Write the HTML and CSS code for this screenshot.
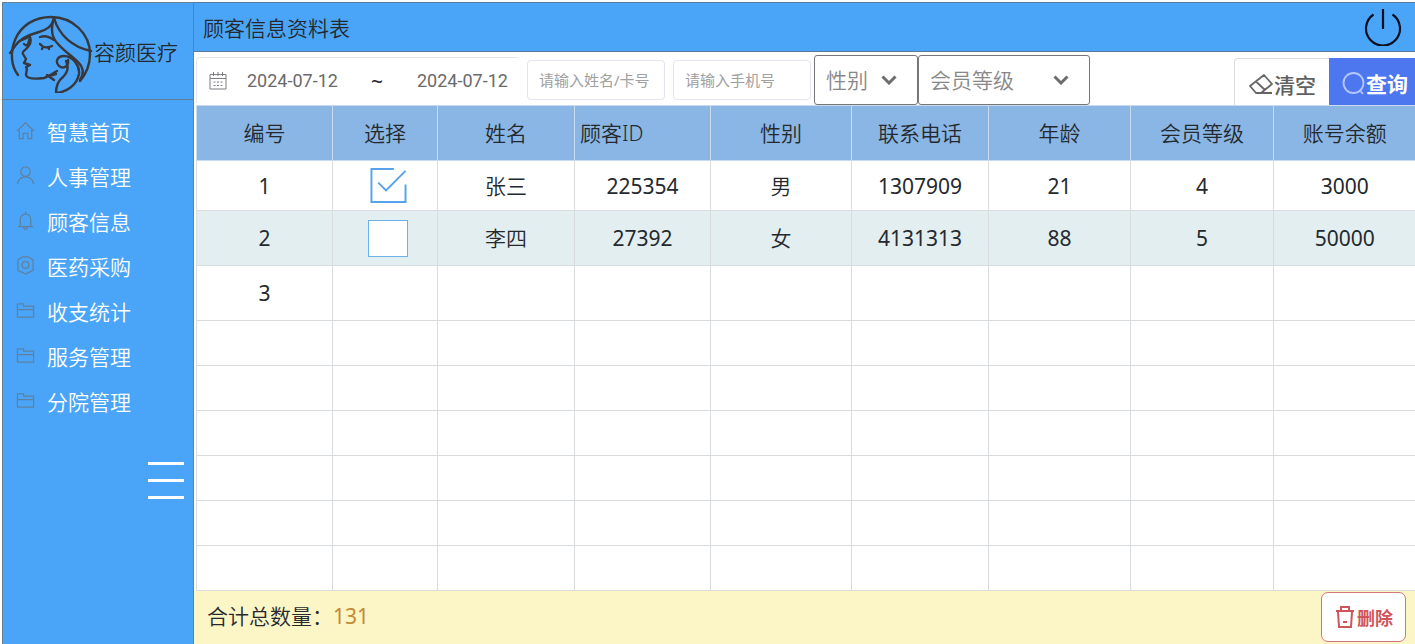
FILE: index.html
```html
<!DOCTYPE html>
<html lang="zh-CN">
<head>
<meta charset="utf-8">
<title>顾客信息资料表</title>
<link rel="stylesheet" href="styles.css">
</head>
<body>
<div class="app">
  <aside class="sidebar">
    <div class="brand">
      <svg class="brand-logo" viewBox="4 -1 86 84" fill="none" stroke="#38383c" stroke-width="2.4" stroke-linecap="round" stroke-linejoin="round">
        <path d="M14 65C7 56 6 42 11 30C17 15 31 7 47 7C69 7 86 24 86 44C86 54 82 64 76 71"/>
        <path d="M50 8C48 17 42 20 35 22C24 25 15 30 11 36C9 39 8 41 6 43"/>
        <path d="M50 8C46 20 49 29 54 34C60 41 68 46 74 52C80 58 80 64 76 70"/>
        <path d="M50 8C55 25 68 37 87 41"/>
        <path d="M64 50C65 57 59 59 55 56C51 52 53 46 60 46C69 46 76 56 75 64C73 75 63 82 52 83C52 75 55 70 59 67C64 62 65 57 62 51"/>
        <path d="M26 27C28 32 26 35 22 39C19 42 18 42 19 44L22 49L20 53L26 55L22 57C24 59 22 62 22 65C23 69 32 69 40 68C46 66 49 63 53 61"/>
        <path d="M43 65L50 70M45 66L52 64"/>
        <path d="M36 27C41 25 46 27 50 30M36 34C39 38 44 38 48 36M39 37L38 39M44 37L45 39M18 30L25 27M20 34C23 37 25 34 25 30"/>
      </svg>
      <span class="brand-name">容颜医疗</span>
    </div>
    <nav class="menu">
      <a class="menu-item" href="#"><svg class="menu-icon" viewBox="0 0 20 20"><path d="M1 10.500L10 2L19 10.500M3.500 9V18.500H7.500V13H12.500V18.500H16.500V9"/></svg>智慧首页</a>
      <a class="menu-item" href="#"><svg class="menu-icon" viewBox="0 0 20 20"><circle cx="10" cy="6" r="5"/><path d="M1.500 19C2 9 18 9 18.500 19"/></svg>人事管理</a>
      <a class="menu-item" href="#"><svg class="menu-icon" viewBox="0 0 20 20"><path d="M2 16.500H18M4.500 16.500V9C4.500 1.500 15.500 1.500 15.500 9V16.500M10 0.500V3M8 16.500C8 20 12 20 12 16.500"/></svg>顾客信息</a>
      <a class="menu-item" href="#"><svg class="menu-icon" viewBox="0 0 20 20"><path d="M7 1H13L18 4V15L10 19L2 15V4Z"/><circle cx="10" cy="9.500" r="3.500"/></svg>医药采购</a>
      <a class="menu-item" href="#"><svg class="menu-icon" viewBox="0 0 20 20"><path d="M1.500 17V3H8V5.500H18.500V17ZM1.500 9H18.500"/></svg>收支统计</a>
      <a class="menu-item" href="#"><svg class="menu-icon" viewBox="0 0 20 20"><path d="M1.500 17V3H8V5.500H18.500V17ZM1.500 9H18.500"/></svg>服务管理</a>
      <a class="menu-item" href="#"><svg class="menu-icon" viewBox="0 0 20 20"><path d="M1.500 17V3H8V5.500H18.500V17ZM1.500 9H18.500"/></svg>分院管理</a>
    </nav>
    <button class="collapse" type="button" aria-label="收起菜单"><span></span><span></span><span></span></button>
  </aside>

  <main class="main">
    <header class="header">
      <h1 class="title">顾客信息资料表</h1>
      <button class="power" type="button" aria-label="退出">
        <svg viewBox="0 0 38 38" width="38" height="38" fill="none" stroke="#0b1020" stroke-width="2.200"><path d="M9.500 6.500A17 17 0 1 0 28.500 6.500M19 1V21"/></svg>
      </button>
    </header>

    <form class="filters">
      <div class="dates">
        <svg class="calendar" viewBox="0 0 18 18"><path d="M1 2.500H17V17H1ZM1 6.500H17M4.500 0V4M9 0V4M13.500 0V4"/><path stroke-dasharray="2 1.500" d="M4.500 10H14M4.500 13.500H14"/></svg>
        <input class="date" type="text" value="2024-07-12" aria-label="开始日期">
        <span class="tilde">~</span>
        <input class="date" type="text" value="2024-07-12" aria-label="结束日期">
      </div>
      <input class="field" type="text" placeholder="请输入姓名/卡号" aria-label="姓名或卡号">
      <input class="field" type="text" placeholder="请输入手机号" aria-label="手机号">
      <div class="selects">
        <div class="picker">
          <select class="select gender" aria-label="性别"><option>性别</option></select>
          <svg class="chevron" viewBox="0 0 16 10"><path d="M1.500 1.500L8 8L14.500 1.500"/></svg>
        </div>
        <div class="picker">
          <select class="select level" aria-label="会员等级"><option>会员等级</option></select>
          <svg class="chevron" viewBox="0 0 16 10"><path d="M1.500 1.500L8 8L14.500 1.500"/></svg>
        </div>
      </div>
      <div class="actions">
        <button class="btn clear" type="reset"><svg viewBox="0 0 26 22" width="26" height="22" fill="none" stroke="#666" stroke-width="1.800" stroke-linejoin="round"><path d="M2 13L16 2L24 11L13 20H8ZM8 8.500L17 17M12 20H24"/></svg>清空</button>
        <button class="btn query" type="button"><svg viewBox="0 0 24 24" width="24" height="24" fill="none" stroke="#b4c6ff" stroke-width="1.800"><circle cx="11.500" cy="12" r="10"/><path d="M17.500 19L21 23"/></svg>查询</button>
      </div>
    </form>

    <table class="grid">
      <colgroup><col class="c136"><col class="c105"><col class="c137"><col class="c136"><col class="c141"><col class="c137"><col class="c142"><col class="c143"><col class="c142"></colgroup>
      <thead>
        <tr><th>编号</th><th>选择</th><th>姓名</th><th class="start">顾客ID</th><th>性别</th><th>联系电话</th><th>年龄</th><th>会员等级</th><th>账号余额</th></tr>
      </thead>
      <tbody>
        <tr class="first">
          <td>1</td>
          <td><label class="check"><input type="checkbox" checked aria-label="选择张三"><svg viewBox="0 0 40 38"><path d="M26 2H3V36H38V18M10 16L18 24L38 4"/></svg></label></td>
          <td class="text">张三</td><td>225354</td><td class="text">男</td><td>1307909</td><td>21</td><td>4</td><td>3000</td>
        </tr>
        <tr class="tall shaded">
          <td>2</td>
          <td><label class="check"><input type="checkbox" aria-label="选择李四"><svg viewBox="0 0 40 38"><path d="M26 2H3V36H38V18M10 16L18 24L38 4"/></svg></label></td>
          <td class="text">李四</td><td>27392</td><td class="text">女</td><td>4131313</td><td>88</td><td>5</td><td>50000</td>
        </tr>
        <tr class="tall"><td>3</td><td></td><td></td><td></td><td></td><td></td><td></td><td></td><td></td></tr>
        <tr><td></td><td></td><td></td><td></td><td></td><td></td><td></td><td></td><td></td></tr>
        <tr><td></td><td></td><td></td><td></td><td></td><td></td><td></td><td></td><td></td></tr>
        <tr><td></td><td></td><td></td><td></td><td></td><td></td><td></td><td></td><td></td></tr>
        <tr><td></td><td></td><td></td><td></td><td></td><td></td><td></td><td></td><td></td></tr>
        <tr><td></td><td></td><td></td><td></td><td></td><td></td><td></td><td></td><td></td></tr>
        <tr><td></td><td></td><td></td><td></td><td></td><td></td><td></td><td></td><td></td></tr>
      </tbody>
    </table>

    <footer class="footer">
      <p class="total">合计总数量：<span class="count">131</span></p>
      <button class="delete" type="button"><svg viewBox="0 0 20 24" width="20" height="24" fill="none" stroke="#d0555b" stroke-width="2"><path d="M1 6H19M6 5V2H14V5M3 7L4 22H16L17 7M8 17H12"/></svg>删除</button>
    </footer>
  </main>
</div>
</body>
</html>
```

FILE: styles.css
```css
* {
  box-sizing: border-box;
}

body {
  margin: 0;
  background: #fff;
  color: #25292d;
  font-family: "Noto Sans", "Noto Sans CJK SC", sans-serif;
  font-size: 21px;
  font-weight: 350;
}

button,
input,
select {
  margin: 0;
  font-family: inherit;
  font-weight: inherit;
}

.app {
  display: flex;
  min-height: 100vh;
  padding: 2px 0 0 2px;
}

.sidebar {
  display: flex;
  flex-direction: column;
  flex: none;
  width: 192px;
  background: #4aa5f8;
  border: 1px solid #6b7f92;
  border-bottom: 0;
}

.brand {
  display: flex;
  align-items: center;
  height: 97px;
  padding-left: 5px;
  border-bottom: 1px solid #5f7d98;
}

.brand-logo {
  flex: none;
  width: 86px;
  height: 84px;
}

.brand-name {
  white-space: nowrap;
}

.menu {
  padding-top: 8px;
}

.menu-item {
  display: flex;
  align-items: center;
  gap: 12px;
  height: 45px;
  padding-left: 13px;
  color: #fff;
  text-decoration: none;
}

.menu-icon {
  width: 19px;
  height: 19px;
  fill: none;
  stroke: #5f819f;
  stroke-width: 1.3;
}

.collapse {
  display: flex;
  flex-direction: column;
  gap: 14px;
  align-self: flex-end;
  margin: 39px 9px 0 0;
  padding: 0;
  border: 0;
  background: none;
}

.collapse span {
  width: 36px;
  height: 3px;
  background: #fff;
}

.main {
  display: flex;
  flex: 1;
  flex-direction: column;
  min-width: 0;
}

.header {
  display: flex;
  align-items: center;
  justify-content: space-between;
  height: 50px;
  padding: 0 13px 0 9px;
  background: #4aa5f8;
  border: solid #557a9a;
  border-width: 1px 0;
}

.title {
  margin: 0;
  font-size: 21px;
  font-weight: 350;
}

.power {
  display: flex;
  padding: 0;
  border: 0;
  background: none;
}

.filters {
  display: flex;
  align-items: center;
  height: 53px;
  padding: 3px 0 0 2px;
}

.dates {
  display: flex;
  align-items: center;
  width: 322px;
  height: 46px;
  margin-right: 9px;
  padding-left: 12px;
  border: solid #e3e6ea;
  border-width: 1px 0 0 1px;
  border-radius: 4px 0 0 0;
}

.calendar {
  width: 18px;
  height: 18px;
  margin-right: 20px;
  fill: none;
  stroke: #7d7d83;
  stroke-width: 1;
}

.date {
  width: 96px;
  padding: 0;
  border: 0;
  background: none;
  color: #6a6a6a;
  font-family: Roboto, sans-serif;
  font-size: 18px;
  font-weight: 400;
}

.tilde {
  width: 74px;
  padding-left: 28px;
  font-weight: 400;
}

.field {
  width: 138px;
  height: 40px;
  margin-right: 8px;
  padding: 0 11px;
  border: 1px solid #e4e4ee;
  border-radius: 4px;
  background: #fff;
  font-size: 15px;
  font-weight: 400;
}

.field::placeholder {
  color: #a0a0a0;
  opacity: 1;
}

.selects {
  display: flex;
  margin-left: -5px;
}

.picker {
  position: relative;
}

.select {
  appearance: none;
  height: 50px;
  padding: 0 11px;
  border: 1px solid #777;
  border-radius: 3px;
  background: #fff;
  color: #888;
  font-size: 21px;
}

.gender {
  width: 104px;
}

.level {
  width: 172px;
}

.chevron {
  position: absolute;
  top: 20px;
  right: 21px;
  width: 16px;
  height: 10px;
  fill: none;
  stroke: #6d6d6d;
  stroke-width: 3;
  pointer-events: none;
}

.actions {
  display: flex;
  align-self: flex-end;
  margin-left: auto;
}

.btn {
  display: flex;
  align-items: center;
  height: 47px;
  padding: 3px 0 0 13px;
  font-size: 21px;
}

.clear {
  width: 95px;
  border: 1px solid #dcdcdc;
  border-width: 1px 0 0 1px;
  border-radius: 4px 0 0 0;
  background: #fff;
  color: #606060;
  font-weight: 500;
}

.query {
  width: 86px;
  border: 0;
  background: #4d77ee;
  color: #fff;
  font-weight: 700;
}

.grid {
  width: calc(100% - 2px);
  margin-left: 2px;
  border-collapse: collapse;
  table-layout: fixed;
}

.c105 { width: 105px; }
.c136 { width: 136px; }
.c137 { width: 137px; }
.c141 { width: 141px; }
.c142 { width: 142px; }
.c143 { width: 143px; }

.grid th,
.grid td {
  height: 45px;
  padding: 0;
  border: 1px solid #d9dcde;
  border-right: 0;
  text-align: center;
  line-height: 30px;
}

.grid th {
  height: 55px;
  background: #8ab6e5;
  border-color: #c9dbee;
  font-weight: 350;
}

.grid th.start {
  padding-left: 5px;
  text-align: left;
}

.grid td {
  font-weight: 400;
}

.grid td.text {
  font-weight: 350;
}

.grid .first td {
  height: 50px;
}

.grid .tall td {
  height: 55px;
}

.grid .shaded td {
  background: #e2eef0;
}

.check {
  display: inline-grid;
  margin-left: 5px;
  vertical-align: middle;
}

.check input,
.check svg {
  grid-area: 1 / 1;
  width: 40px;
  height: 37px;
}

.check input {
  appearance: none;
  border: 1px solid #6cb0e8;
  background: #fff;
}

.check input:checked {
  border-color: transparent;
}

.check svg {
  display: none;
  fill: none;
  stroke: #55a3ea;
  stroke-width: 2;
  pointer-events: none;
}

.check input:checked + svg {
  display: block;
}

.footer {
  display: flex;
  flex: 1;
  align-items: flex-start;
  justify-content: space-between;
  min-height: 53px;
  padding: 1px 9px 0 13px;
  background: #fcf5c6;
}

.total {
  margin: 0;
  line-height: 48px;
}

.count {
  color: #c58a35;
  font-weight: 400;
}

.delete {
  display: flex;
  align-items: center;
  gap: 2px;
  width: 85px;
  height: 50px;
  padding: 0 0 0 13px;
  border: 1px solid #d4747b;
  border-radius: 7px;
  background: #fff;
  color: #d0555b;
  font-size: 18px;
  font-weight: 700;
}
```
